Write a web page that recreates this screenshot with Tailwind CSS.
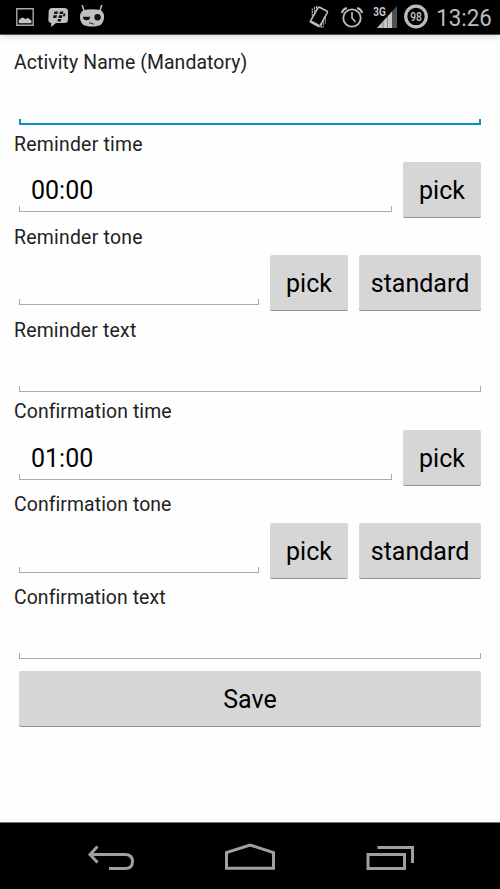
<!DOCTYPE html>
<html lang="en">
<head>
<meta charset="utf-8">
<title>Activity</title>
<script src="https://cdn.jsdelivr.net/npm/@tailwindcss/browser@4"></script>
</head>
<body class="w-[500px] h-[889px] overflow-hidden bg-[#fefefe] flex flex-col font-[Roboto,sans-serif] text-black">
<header class="h-[35px] shrink-0 bg-black border-b border-[#555] shadow-[0_1px_7px_rgba(0,0,0,0.2)]">
<svg class="block" width="500" height="34" viewBox="0 0 500 34" fill="none" stroke="#bdbdbd">
  <path d="M16.800 8.800h16.400v16.400H16.800z" stroke="#aaa" stroke-width="1.400"/>
  <path d="M18.800 23.300v-3.300l2.500-2 1.500-.5 3 1.800 2-1.500 2.200 1.800 1.500 1v2.700z" fill="#c4c4c4" stroke="none"/>
  <path d="M52 8h12.500q3.500 0 3.500 3.500v8q0 3.500-3.500 3.500H56l-4.800 4v-4q-3-.3-2.800-3.500l.3-8q.2-3.500 3.300-3.500z" fill="#c0c0c0" stroke="none"/>
  <path d="M54.500 11.500h3.500l-.6 2.600h-3.500zM60 11.500h3.500l-.6 2.600h-3.500zM53.500 15.300h3.500l-.6 2.600H53zM59 15.300h3.500l-.6 2.600h-3.500zM63.500 13.600h2l-.5 2.600h-2zM58 19h3.300l-.6 2.400h-3.300z" fill="#111" stroke="none"/>
  <path d="M82 5l2.200 6M101.800 5l-2 6" stroke-width="1.500"/>
  <path d="M84 10q8-1.500 16 0 4 1.500 4 7 0 5-3 7.500-3 2-9 2t-9-2q-3-2.500-3-7.500 0-5.500 4-7z" fill="#c0c0c0" stroke="none"/>
  <path d="M82.800 16.800h7.500q-.3 3.500-3.700 3.500t-3.800-3.500z" fill="#111" stroke="none"/>
  <circle cx="97.600" cy="17.300" r="3.200" fill="#111" stroke="none"/>
  <path d="M89 23l3 .2 2 1.300" stroke="#222" stroke-width="1"/>
  <path d="M319.500 7.300l7.300 3.700q1 .5.500 1.600l-7.300 13.200q-.6 1-1.600.5l-7.400-4q-1-.5-.5-1.500l7.500-13q.5-1 1.500-.5z" stroke-width="1.600"/>
  <path d="M311.500 20.500l8 4.300-1 1.700-8-4.300z" fill="#bdbdbd" stroke="none"/>
  <path d="M312.300 8.500v8M314.500 7v7.500M316.500 6v5M325.300 17v6.500M323.300 20.500v7M321.300 23.500v5" stroke-width="1.100" stroke-dasharray="2 .6"/>
  <circle cx="352" cy="18" r="8.700" stroke-width="1.800"/>
  <path d="M352 12v6l3.500 4" stroke-width="1.600"/>
  <path d="M341.800 13q1-3.800 5-5M362.200 13q-1-3.800-5-5" stroke-width="2"/>
  <path d="M377 28L397 6v22z" fill="#505050" stroke="none"/>
  <path d="M377 28L392 11.500v16.500z" fill="#c4c4c4" stroke="none"/>
  <path d="M383 21v7M387.500 16v12" stroke="#666" stroke-width=".7"/>
  <path d="M372 5h14.500v12.500h-14.500z" fill="#000" stroke="none"/>
  <text x="373.300" y="16.300" font-size="12.500" font-weight="700" textLength="12.500" lengthAdjust="spacingAndGlyphs" fill="#c4c4c4" stroke="none">3G</text>
  <circle cx="416" cy="16.500" r="10.300" stroke-width="3.200"/>
  <text x="410.200" y="21" font-size="12.500" font-weight="500" textLength="11.600" lengthAdjust="spacingAndGlyphs" fill="#c4c4c4" stroke="none">98</text>
  <text x="436.300" y="26" font-size="23.500" textLength="55.500" lengthAdjust="spacingAndGlyphs" fill="#bdbdbd" stroke="none">13:26</text>
</svg>
</header>
<main class="flex-1 px-[14px] pt-[14px] text-[19.400px] text-[#222]">
  <div class="h-[26px] leading-[28px] tracking-[0.1px]">Activity Name (Mandatory)</div>
  <div class="h-[55.500px] px-[5px] pt-[44px]"><div class="h-[6px] border-2 border-t-0 border-[#0a93c8]"></div></div>

  <div class="h-[26px] leading-[27px] tracking-[0.250px]">Reminder time</div>
  <div class="h-[67px] px-[5px] pt-[5.500px] flex gap-[11px] text-[25px] text-black">
    <div class="flex-1 h-[50px] pl-[12px] flex flex-col justify-between"><span class="h-[44px] leading-[58px]">00:00</span><div class="-ml-[12px] h-[6px] border border-t-0 border-[#aaa]"></div></div>
    <button class="w-[78px] h-[56px] pt-[3px] rounded-[2px] bg-[#d6d6d6] border-b border-[#909090]">pick</button>
  </div>

  <div class="h-[26px] leading-[27px] tracking-[0.250px]">Reminder tone</div>
  <div class="h-[67px] px-[5px] pt-[5.500px] flex gap-[11px] text-[25px] text-black">
    <div class="flex-1 h-[50px] flex flex-col justify-end"><div class="h-[6px] border border-t-0 border-[#aaa]"></div></div>
    <button class="w-[78px] h-[56px] pt-[3px] rounded-[2px] bg-[#d6d6d6] border-b border-[#909090]">pick</button>
    <button class="w-[122px] h-[56px] pt-[3px] rounded-[2px] bg-[#d6d6d6] border-b border-[#909090]">standard</button>
  </div>

  <div class="h-[26px] leading-[27px] tracking-[0.200px]">Reminder text</div>
  <div class="h-[55.500px] px-[5px] pt-[43px]"><div class="h-[6px] border border-t-0 border-[#aaa]"></div></div>

  <div class="h-[26px] leading-[28px] tracking-[0.100px]">Confirmation time</div>
  <div class="h-[67px] px-[5px] pt-[5.500px] flex gap-[11px] text-[25px] text-black">
    <div class="flex-1 h-[50px] pl-[12px] flex flex-col justify-between"><span class="h-[44px] leading-[58px]">01:00</span><div class="-ml-[12px] h-[6px] border border-t-0 border-[#aaa]"></div></div>
    <button class="w-[78px] h-[56px] pt-[3px] rounded-[2px] bg-[#d6d6d6] border-b border-[#909090]">pick</button>
  </div>

  <div class="h-[26px] leading-[28px] tracking-[0.100px]">Confirmation tone</div>
  <div class="h-[67px] px-[5px] pt-[5.500px] flex gap-[11px] text-[25px] text-black">
    <div class="flex-1 h-[50px] flex flex-col justify-end"><div class="h-[6px] border border-t-0 border-[#aaa]"></div></div>
    <button class="w-[78px] h-[56px] pt-[3px] rounded-[2px] bg-[#d6d6d6] border-b border-[#909090]">pick</button>
    <button class="w-[122px] h-[56px] pt-[3px] rounded-[2px] bg-[#d6d6d6] border-b border-[#909090]">standard</button>
  </div>

  <div class="h-[26px] leading-[28px] tracking-[0.080px]">Confirmation text</div>
  <div class="h-[55.500px] px-[5px] pt-[43px]"><div class="h-[6px] border border-t-0 border-[#aaa]"></div></div>

  <div class="px-[5px] pt-[5px] text-[25px] text-black"><button class="block w-full h-[56px] pt-[3px] rounded-[2px] bg-[#d6d6d6] border-b border-[#909090]">Save</button></div>
</main>
<nav class="h-[67px] shrink-0 bg-black border-t border-[#777]">
<svg class="block" width="500" height="66" viewBox="0 823 500 66" fill="none" stroke="#a0a0a0" stroke-width="3">
  <path d="M90 854.500h35q7.500 0 7.500 7t-7.500 7h-16"/>
  <path d="M97.500 846.500l-7.500 8 7.500 8"/>
  <path d="M226.500 868.300v-15.800l23.500-7.500 23.500 7.500v15.800z"/>
  <path d="M368 854.500h36.500v14H368zM377.500 847.500h35v15.500"/>
</svg>
</nav>
</body>
</html>
